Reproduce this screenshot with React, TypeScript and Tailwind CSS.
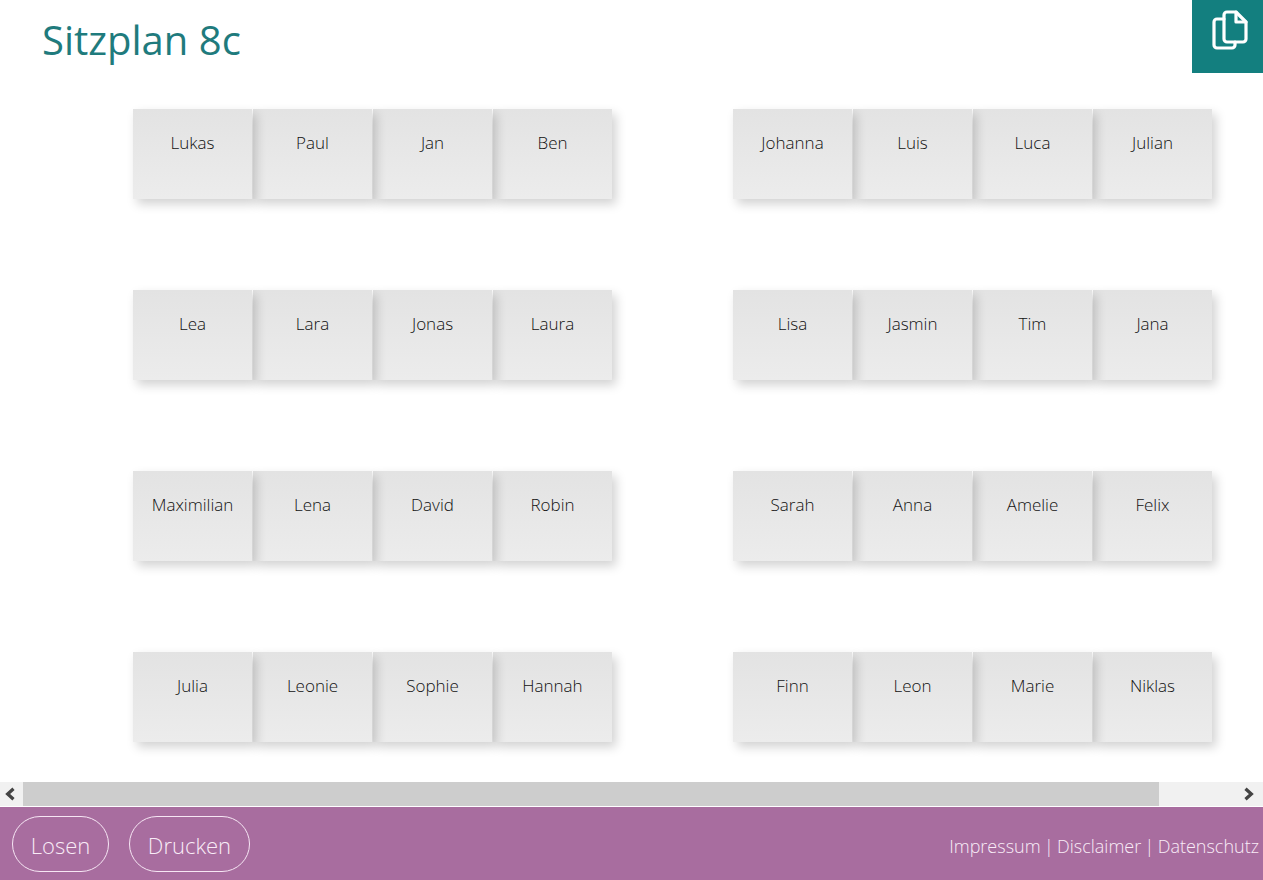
const tables = [
  [
    ['Lukas', 'Paul', 'Jan', 'Ben'],
    ['Johanna', 'Luis', 'Luca', 'Julian'],
  ],
  [
    ['Lea', 'Lara', 'Jonas', 'Laura'],
    ['Lisa', 'Jasmin', 'Tim', 'Jana'],
  ],
  [
    ['Maximilian', 'Lena', 'David', 'Robin'],
    ['Sarah', 'Anna', 'Amelie', 'Felix'],
  ],
  [
    ['Julia', 'Leonie', 'Sophie', 'Hannah'],
    ['Finn', 'Leon', 'Marie', 'Niklas'],
  ],
];

// first seat lies on top so its shadow falls on the next one
const stack = ['z-[4]', 'z-[3]', 'z-[2]', 'z-[1]'];

function Seat({ name, index }: { name: string; index: number }) {
  return (
    <div
      className={`relative ${stack[index]} mr-px h-[90px] w-[119px] bg-gradient-to-b from-[#e3e3e3] to-[#ececec] pt-[21px] text-center text-[17px] font-light leading-[26px] text-[#111] shadow-[4px_5px_10px_rgba(0,0,0,0.18)]`}
    >
      {name}
    </div>
  );
}

function CopyIcon() {
  return (
    <svg viewBox="0 0 36 40" className="h-10 w-9" fill="none" stroke="#fff" strokeWidth="3.2" strokeLinejoin="round" strokeLinecap="round">
      <path d="M12 9 H5 a3 3 0 0 0 -3 3 V35 a3 3 0 0 0 3 3 H20 a3 3 0 0 0 3 -3 V32" />
      <path d="M12 5 a3 3 0 0 1 3 -3 H24 L34 12 V29 a3 3 0 0 1 -3 3 H15 a3 3 0 0 1 -3 -3 Z" />
      <path d="M24 2 V12 H34" />
    </svg>
  );
}

function Pill({ children, className }: { children: string; className: string }) {
  return (
    <button
      type="button"
      className={`${className} h-14 rounded-[28px] border border-[#f6e6f4] pt-[3px] text-center text-[22px] font-light text-[#f9ecf7]`}
    >
      {children}
    </button>
  );
}

export default function App() {
  return (
    <div className="relative flex h-[880px] w-[1263px] flex-col overflow-hidden bg-white font-['Open_Sans','Noto_Sans',sans-serif]">
      <div className="flex h-[782px] flex-col">
        <header className="flex h-[109px] items-start justify-between">
          <h1 className="ml-[42px] mt-[12px] text-[40px] leading-[56px] text-[#1f7b7d]">Sitzplan 8c</h1>
          <button type="button" className="flex h-[73px] w-[71px] justify-center bg-[#137f7f] pl-1 pt-2.5">
            <CopyIcon />
          </button>
        </header>
        <div className="flex flex-col gap-[91px] pl-[133px]">
          {tables.map((row) => (
            <div key={row[0][0]} className="flex gap-[120px]">
              {row.map((group) => (
                <div key={group[0]} className="flex">
                  {group.map((name, i) => (
                    <Seat key={name} name={name} index={i} />
                  ))}
                </div>
              ))}
            </div>
          ))}
        </div>
      </div>

      <div className="flex h-[24px] bg-[#f1f1f1]">
        <div className="flex w-[23px] items-center justify-center pr-1">
          <svg viewBox="0 0 10 12" className="h-3.5 w-3" fill="none" stroke="#444" strokeWidth="2.8">
            <path d="M8 1.5 L3 6 L8 10.5" />
          </svg>
        </div>
        <div className="w-[1136px] bg-[#cdcdcd]" />
        <div className="flex flex-1 items-center justify-end pr-[8px]">
          <svg viewBox="0 0 10 12" className="h-3.5 w-3" fill="none" stroke="#444" strokeWidth="2.8">
            <path d="M2 1.5 L7 6 L2 10.5" />
          </svg>
        </div>
      </div>

      <footer className="mt-px flex flex-1 items-center justify-between bg-[#a86d9f] pl-3 pr-1">
        <div className="flex gap-5">
          <Pill className="w-[97px]">Losen</Pill>
          <Pill className="w-[121px]">Drucken</Pill>
        </div>
        <div className="pt-[5px] text-[18px] font-light text-[#f9ecf7] [word-spacing:-1.3px]">Impressum | Disclaimer | Datenschutz</div>
      </footer>
    </div>
  );
}
